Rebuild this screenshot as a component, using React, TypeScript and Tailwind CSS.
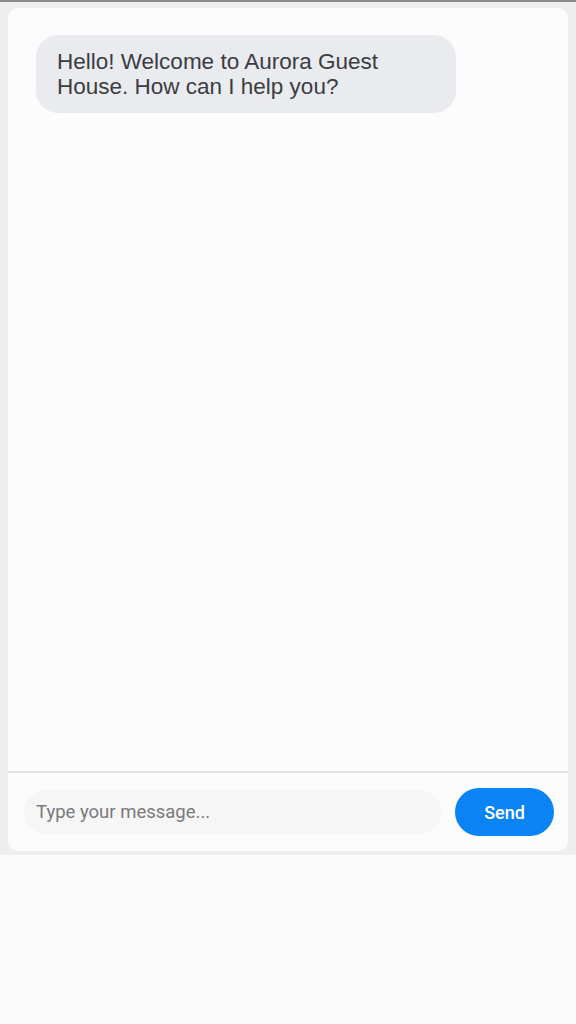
import { useState } from 'react';

export default function App() {
  const [value, setValue] = useState('');

  return (
    <div className="min-h-[1024px] bg-[#fafafa]" style={{ fontFamily: '"Liberation Sans", Arial, sans-serif' }}>
      <div className="h-[855px] bg-[#eceef0] border-t-2 border-[#8a8a8a] px-2 pt-[6px] pb-1">
        <div className="h-full flex flex-col rounded-[10px] bg-[#fcfcfc] overflow-hidden">
          <div className="flex-1 px-7 pt-[27px]">
            <div className="w-[420px] rounded-[22px] bg-[#e9ebee] px-[21px] py-[14px] text-[22.5px] leading-[25px] text-[#3a3d42]">
              Hello! Welcome to Aurora Guest House. How can I help you?
            </div>
          </div>
          <div className="h-[80px] border-t-2 border-[#e3e4e6] flex items-center pl-4 pr-[14px] gap-[13px]">
            <input
              value={value}
              onChange={e => setValue(e.target.value)}
              placeholder="Type your message..."
              className="flex-1 h-[44px] rounded-full bg-[#f6f6f6] px-3 text-[18.5px] text-[#333] placeholder:text-[#7a7a7a] outline-none"
              style={{ fontFamily: 'Roboto, "Liberation Sans", sans-serif' }}
            />
            <button
              className="w-[99px] h-[48px] rounded-full bg-[#0a84f5] text-white text-[18px] font-medium"
              style={{ fontFamily: 'Roboto, "Liberation Sans", sans-serif' }}
            >
              Send
            </button>
          </div>
        </div>
      </div>
    </div>
  );
}
